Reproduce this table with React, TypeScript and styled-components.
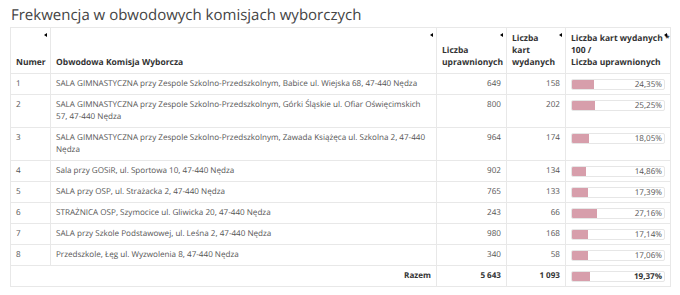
import React from "react";
import styled, { createGlobalStyle } from "styled-components";

const Global = createGlobalStyle`
  html, body { margin: 0; padding: 0; background: #fff; }
  body {
    font-family: "Open Sans", "Noto Sans", sans-serif;
    color: #555;
    text-rendering: geometricPrecision;
  }
`;

const Page = styled.div`
  padding: 6px 10px 0 10px;
`;

const Title = styled.h1`
  margin: 0 0 3px 1px;
  font-size: 15px;
  line-height: 18px;
  font-weight: 400;
  color: #444;
`;

const Table = styled.table`
  width: 660px;
  table-layout: fixed;
  border-collapse: collapse;
  font-size: 8.1px;
  line-height: 12px;
  border: 1px solid #e8e8e8;
`;

const Th = styled.th<{ $align?: string }>`
  position: relative;
  padding: 5px 3px 4px 5px;
  vertical-align: bottom;
  text-align: ${(p) => p.$align || "left"};
  font-size: 8.5px;
  font-weight: 700;
  white-space: nowrap;
  color: #333;
  border: 1px solid #e8e8e8;
  height: 36px;
`;

const SortArrow = styled.span`
  position: absolute;
  top: 5px;
  right: 3px;
  width: 0;
  height: 0;
  border-top: 2px solid transparent;
  border-bottom: 2px solid transparent;
  border-right: 3px solid #000;
`;

const Td = styled.td<{ $align?: string; $bold?: boolean; $text?: boolean }>`
  padding: 4px ${(p) => (p.$text ? 8 : 5)}px 4px 5px;
  vertical-align: top;
  text-align: ${(p) => p.$align || "left"};
  font-weight: ${(p) => (p.$bold ? 700 : 400)};
  color: ${(p) => (p.$bold ? "#333" : "#555")};
  border: 1px solid #e8e8e8;
`;

const BarBox = styled.div`
  display: grid;
  height: 11px;
  margin-top: 1px;
  border: 1px solid #e6e6e6;
  border-radius: 2px;
  box-sizing: border-box;
  overflow: hidden;
`;

const BarFill = styled.div`
  grid-area: 1 / 1;
  background: #d79eab;
  height: 100%;
`;

const BarLabel = styled.div<{ $bold?: boolean }>`
  grid-area: 1 / 1;
  justify-self: end;
  align-self: center;
  padding-right: 2px;
  line-height: 9px;
  font-weight: ${(p) => (p.$bold ? 700 : 400)};
  color: ${(p) => (p.$bold ? "#333" : "#555")};
`;

const rows = [
  ["1", "SALA GIMNASTYCZNA przy Zespole Szkolno-Przedszkolnym, Babice ul. Wiejska 68, 47-440 Nędza", "649", "158", 24.35],
  ["2", "SALA GIMNASTYCZNA przy Zespole Szkolno-Przedszkolnym, Górki Śląskie ul. Ofiar Oświęcimskich 57, 47-440 Nędza", "800", "202", 25.25],
  ["3", "SALA GIMNASTYCZNA przy Zespole Szkolno-Przedszkolnym, Zawada Książęca ul. Szkolna 2, 47-440 Nędza", "964", "174", 18.05],
  ["4", "Sala przy GOSiR, ul. Sportowa 10, 47-440 Nędza", "902", "134", 14.86],
  ["5", "SALA przy OSP, ul. Strażacka 2, 47-440 Nędza", "765", "133", 17.39],
  ["6", "STRAŻNICA OSP, Szymocice ul. Gliwicka 20, 47-440 Nędza", "243", "66", 27.16],
  ["7", "SALA przy Szkole Podstawowej, ul. Leśna 2, 47-440 Nędza", "980", "168", 17.14],
  ["8", "Przedszkole, Łęg ul. Wyzwolenia 8, 47-440 Nędza", "340", "58", 17.06],
] as const;

const fmt = (v: number) => v.toFixed(2).replace(".", ",") + "%";

const Bar = ({ pct, bold }: { pct: number; bold?: boolean }) => (
  <BarBox>
    <BarFill style={{ width: `${pct}%` }} />
    <BarLabel $bold={bold}>{fmt(pct)}</BarLabel>
  </BarBox>
);

export default function App() {
  return (
    <>
      <Global />
      <Page>
        <Title>Frekwencja w obwodowych komisjach wyborczych</Title>
        <Table>
          <colgroup>
            <col style={{ width: 40 }} />
            <col style={{ width: 386 }} />
            <col style={{ width: 70 }} />
            <col style={{ width: 59 }} />
            <col style={{ width: 105 }} />
          </colgroup>
          <thead>
            <tr>
              <Th>Numer<SortArrow /></Th>
              <Th>Obwodowa Komisja Wyborcza<SortArrow /></Th>
              <Th>Liczba<br />uprawnionych<SortArrow /></Th>
              <Th>Liczba<br />kart<br />wydanych<SortArrow /></Th>
              <Th>
                Liczba kart wydanych *<br />100 /<br />Liczba uprawnionych
                <SortArrow />
              </Th>
            </tr>
          </thead>
          <tbody>
            {rows.map((r) => (
              <tr key={r[0]}>
                <Td>{r[0]}</Td>
                <Td $text>{r[1]}</Td>
                <Td $align="right">{r[2]}</Td>
                <Td $align="right">{r[3]}</Td>
                <Td><Bar pct={r[4]} /></Td>
              </tr>
            ))}
          </tbody>
          <tfoot>
            <tr>
              <Td colSpan={2} $align="right" $bold>Razem</Td>
              <Td $align="right" $bold>5 643</Td>
              <Td $align="right" $bold>1 093</Td>
              <Td><Bar pct={19.37} bold /></Td>
            </tr>
          </tfoot>
        </Table>
      </Page>
    </>
  );
}
